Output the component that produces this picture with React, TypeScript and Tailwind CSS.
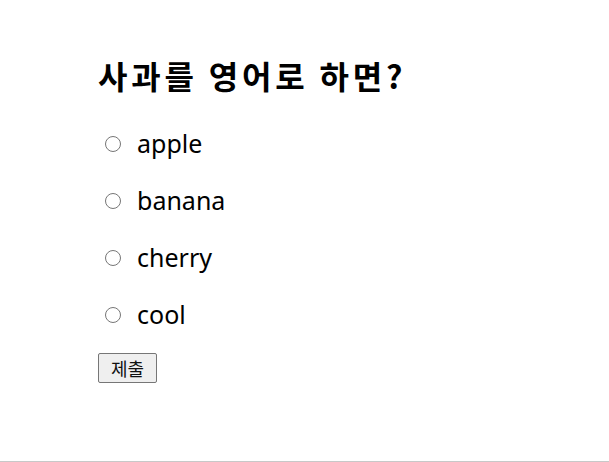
export default function App() {
  const options = ['apple', 'banana', 'cherry', 'cool'];

  return (
    <div className="w-[609px] h-[462px] bg-white flex flex-col border-b border-[#c8c8c8] overflow-hidden">
      <form className="pl-[98px] pt-[52px] flex flex-col items-start">
        <h2
          className="text-[32px] font-bold leading-[46px] tracking-[3.8px] text-black"
          style={{ fontFamily: '"Noto Sans CJK KR", "Noto Sans", sans-serif' }}
        >
          사과를 영어로 하면?
        </h2>

        <div className="mt-[29px] flex flex-col gap-[23px]">
          {options.map((opt) => (
            <label
              key={opt}
              className="flex items-center h-[34px] text-[25px] text-black"
              style={{ fontFamily: '"Noto Sans", "Open Sans", sans-serif' }}
            >
              <input
                type="radio"
                name="answer"
                value={opt}
                className="w-[16px] h-[16px] ml-[7px] mr-[16px] m-0"
              />
              <span>{opt}</span>
            </label>
          ))}
        </div>

        <button
          type="button"
          className="mt-[21px] w-[59px] h-[30px] bg-[#efefef] border border-[#767676] rounded-[2px] text-[18px] text-[#111]"
          style={{ fontFamily: '"Noto Sans CJK KR", sans-serif' }}
        >
          제출
        </button>
      </form>
    </div>
  );
}
